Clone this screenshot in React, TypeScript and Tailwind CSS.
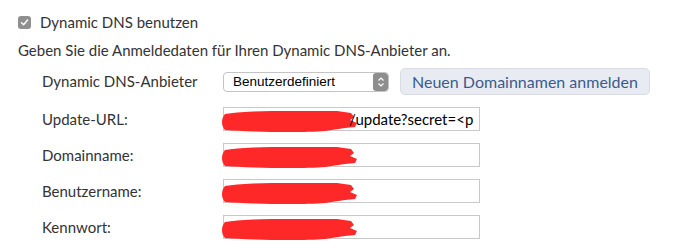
import React from 'react';

const font = { fontFamily: 'Lato, "Open Sans", sans-serif' };

function Redact({ w = 138 }: { w?: number }) {
  // red scribble that hides the stored value
  return (
    <svg className="absolute left-[-3px] top-[1px]" width={w} height="24" viewBox={`0 0 ${w} 24`}>
      <path
        d={`M4 5 C 25 1, 70 2, ${w - 22} 2 L ${w - 8} 4 L ${w - 5} 8 L ${w - 9} 11 L ${w - 2} 14 L ${w - 4} 18 L ${w - 14} 19 L ${w - 34} 22 C 80 24, 30 23, 4 21 C 0 17, 0 9, 4 5 Z`}
        fill="#ff2828"
      />
    </svg>
  );
}

function Row({ label, children }: { label: string; children: React.ReactNode }) {
  return (
    <div className="flex items-center">
      <div className="w-[181px] shrink-0 text-[15px] text-[#333]">{label}</div>
      {children}
    </div>
  );
}

function Field({ text }: { text?: string }) {
  return (
    <div className="relative h-[24px] w-[257px] border border-[#c9c9c9] bg-white">
      <Redact />
      {text && (
        <span className="absolute left-[125px] top-[1px] text-[15px] leading-[20px] text-black">{text}</span>
      )}
    </div>
  );
}

export default function App() {
  return (
    <div className="h-[250px] w-[693px] bg-white text-[#333]" style={font}>
      <div className="flex items-center gap-[9px] pl-[18px] pt-[15px]">
        <span className="grid h-[13px] w-[13px] place-items-center rounded-[3px] bg-[#8f8f8f]">
          <svg width="9" height="9" viewBox="0 0 9 9">
            <path d="M1.5 4.8 L3.6 6.8 L7.6 2" stroke="white" strokeWidth="1.5" fill="none" strokeLinecap="round" strokeLinejoin="round" />
          </svg>
        </span>
        <span className="text-[15px] leading-[15px]">Dynamic DNS benutzen</span>
      </div>
      <div className="pl-[18px] pt-[11px] text-[15px] leading-[18px]">
        Geben Sie die Anmeldedaten für Ihren Dynamic DNS-Anbieter an.
      </div>
      <div className="flex flex-col gap-[12px] pl-[42px] pt-[9px]">
        <Row label="Dynamic DNS-Anbieter">
          <div className="flex h-[20px] w-[166px] items-stretch overflow-hidden rounded-[4px] border border-[#c4c4c4] bg-white">
            <span className="flex-1 pl-[9px] text-[13.5px] leading-[18px] text-black" style={{ fontFamily: '"Liberation Sans", Arial, sans-serif' }}>
              Benutzerdefiniert
            </span>
            <span className="grid w-[15px] place-items-center rounded-[3px] bg-[#8e8e8e]">
              <svg width="8" height="12" viewBox="0 0 8 12">
                <path d="M1.5 4.5 L4 2 L6.5 4.5 M1.5 7.5 L4 10 L6.5 7.5" stroke="white" strokeWidth="1.2" fill="none" />
              </svg>
            </span>
          </div>
          <button className="ml-[11px] h-[27px] w-[250px] rounded-[5px] border border-[#d8dde5] bg-[#e8ecf2] text-[16px] text-[#3b5b8c]">
            Neuen Domainnamen anmelden
          </button>
        </Row>
        <Row label="Update-URL:">
          <Field text="/update?secret=<p" />
        </Row>
        <Row label="Domainname:">
          <Field />
        </Row>
        <Row label="Benutzername:">
          <Field />
        </Row>
        <Row label="Kennwort:">
          <Field />
        </Row>
      </div>
    </div>
  );
}
